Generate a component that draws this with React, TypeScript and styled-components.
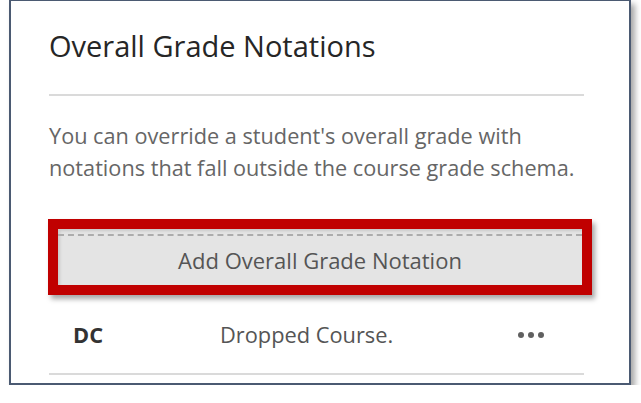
import React from "react";
import styled, { createGlobalStyle } from "styled-components";

const Global = createGlobalStyle`
  html, body { margin: 0; padding: 0; background: #ffffff; }
  body { font-family: "Open Sans", "Noto Sans", sans-serif; }
`;

const Frame = styled.div`
  box-sizing: border-box;
  margin: -1px 0 0 9px;
  width: 622px;
  height: 386px;
  border: 2px solid #4b5a72;
  background: #ffffff;
  box-shadow: 4px 5px 6px rgba(0, 0, 0, 0.35);
  padding: 0 45px 0 38px;
  display: flex;
  flex-direction: column;
`;

const Title = styled.h2`
  margin: 0;
  padding-top: 25px;
  font-size: 29px;
  font-weight: 400;
  line-height: 40px;
  color: #262626;
  height: 93px;
  box-sizing: border-box;
`;

const Divider = styled.div`
  flex: none;
  height: 2px;
  background: #dadada;
`;

const Desc = styled.p`
  margin: 0;
  padding-top: 24px;
  font-size: 21.7px;
  line-height: 32px;
  color: #666666;
`;

const Highlight = styled.div`
  margin: 35px -8px 0 -1px;
  border: 10px solid #c00000;
  box-shadow: 3px 4px 5px rgba(0, 0, 0, 0.35);
`;

const AddButton = styled.button`
  position: relative;
  display: block;
  width: 100%;
  height: 56px;
  border: none;
  background: #e4e4e4;
  box-shadow: inset 2px 2px 3px rgba(0, 0, 0, 0.12);
  font-family: "Open Sans", "Noto Sans", sans-serif;
  font-size: 22px;
  color: #555555;
  padding: 6px 0 0;
  &::before {
    content: "";
    position: absolute;
    left: 0;
    right: 0;
    top: 5px;
    border-top: 2px dashed #acacac;
  }
`;

const Row = styled.div`
  flex: none;
  display: grid;
  grid-template-columns: 147px 298px 40px;
  align-items: center;
  height: 78px;
  padding: 0 0 0 24px;
  color: #555555;
  font-size: 21.8px;
`;

const Code = styled.span`
  font-weight: 700;
  color: #333333;
`;

const Dots = styled.span`
  display: flex;
  gap: 4px;
  margin-top: 1px;
  & > i {
    width: 6px;
    height: 6px;
    border-radius: 50%;
    background: #606060;
  }
`;

export default function App() {
  return (
    <>
      <Global />
      <Frame>
        <Title>Overall Grade Notations</Title>
        <Divider />
        <Desc>
          You can override a student's overall grade with notations that fall
          outside the course grade schema.
        </Desc>
        <Highlight>
          <AddButton>Add Overall Grade Notation</AddButton>
        </Highlight>
        <Row>
          <Code>DC</Code>
          <span>Dropped Course.</span>
          <Dots>
            <i />
            <i />
            <i />
          </Dots>
        </Row>
        <Divider />
      </Frame>
    </>
  );
}
